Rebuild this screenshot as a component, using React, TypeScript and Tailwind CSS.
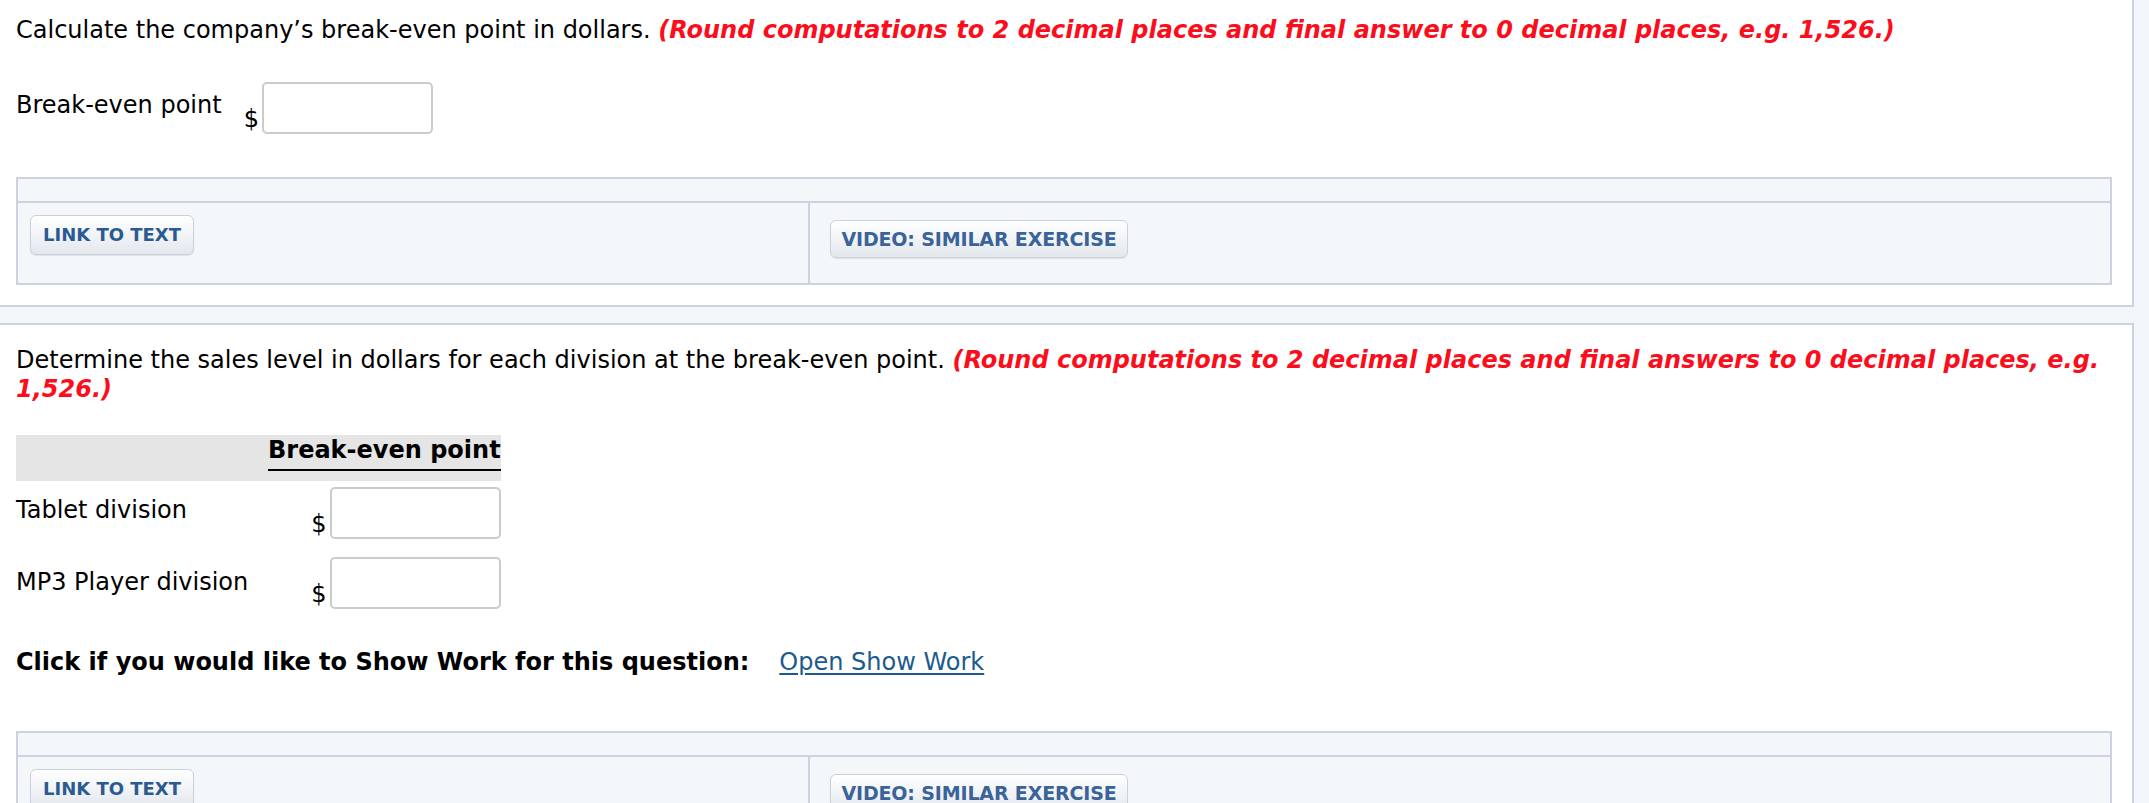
import React from "react";

function LinkButton() {
  return (
    <button className="h-[40px] w-[164px] rounded-[6px] border border-[#c9d1dc] bg-gradient-to-b from-white to-[#e3e8ee] text-[18px] font-bold leading-none text-[#2b5a91] shadow-[0_1px_1px_rgba(0,0,0,0.08)]">
      LINK TO TEXT
    </button>
  );
}

function VideoButton() {
  return (
    <button className="h-[38px] w-[298px] rounded-[6px] border border-[#c9d1dc] bg-gradient-to-b from-white to-[#e3e8ee] text-[19px] font-bold leading-none tracking-[-0.15px] text-[#3a6399] shadow-[0_1px_1px_rgba(0,0,0,0.08)]">
      VIDEO: SIMILAR EXERCISE
    </button>
  );
}

function ResourceBox() {
  return (
    <div className="border-2 border-[#cad3df] bg-[#f4f7fa]">
      <div className="h-[24px] border-b-2 border-[#cad3df]" />
      <div className="grid h-[80px] grid-cols-[790px_1fr]">
        <div className="pl-3 pt-3">
          <LinkButton />
        </div>
        <div className="border-l-2 border-[#cad3df] pl-5 pt-[17px]">
          <VideoButton />
        </div>
      </div>
    </div>
  );
}

function AnswerInput() {
  return (
    <input
      type="text"
      className="h-[52px] w-[171px] rounded-[5px] border-2 border-[#cbcbcb] bg-white outline-none"
    />
  );
}

export default function App() {
  return (
    <div className="min-h-screen bg-[#f4f7fa] font-['DejaVu_Sans',Verdana,sans-serif] text-[24px] leading-[29px] text-black">
      <section className="w-[2134px] border-b-2 border-r-2 border-[#cad3df] bg-white pb-5 pl-4 pr-5 pt-4">
        <p className="whitespace-nowrap">
          Calculate the company’s break-even point in dollars.{" "}
          <span className="font-bold italic text-[#fc0d1b]">
            (Round computations to 2 decimal places and final answer to 0 decimal places, e.g. 1,526.)
          </span>
        </p>
        <div className="mt-[37px] flex">
          <span className="mt-[9px] self-start">Break-even point</span>
          <span className="ml-[22px] mr-[3px] self-end">$</span>
          <AnswerInput />
        </div>
        <div className="mt-[43px]">
          <ResourceBox />
        </div>
      </section>

      <div className="h-4" />

      <section className="w-[2134px] border-r-2 border-t-2 border-[#cad3df] bg-white pb-10 pl-4 pr-5 pt-[21px]">
        <p className="whitespace-nowrap">
          Determine the sales level in dollars for each division at the break-even point.{" "}
          <span className="font-bold italic text-[#fc0d1b]">
            (Round computations to 2 decimal places and final answers to 0 decimal places, e.g.
            <br />
            1,526.)
          </span>
        </p>

        <div className="mt-[31px] inline-grid grid-cols-[252px_auto]">
          <div className="bg-[#e5e5e5]" />
          <div className="bg-[#e5e5e5] pb-[10px] pt-[1px]">
            <div className="border-b-2 border-black pb-[4px] text-right font-bold">Break-even point</div>
          </div>

          <div className="pt-[6px]">
            <div className="mt-[9px]">Tablet division</div>
          </div>
          <div className="flex items-end justify-end pt-[6px]">
            <span className="mr-[3px]">$</span>
            <AnswerInput />
          </div>

          <div className="pt-[18px]">
            <div className="mt-[11px]">MP3 Player division</div>
          </div>
          <div className="flex items-end justify-end pt-[18px]">
            <span className="mr-[3px]">$</span>
            <AnswerInput />
          </div>
        </div>

        <div className="mt-[39px] flex">
          <span className="font-bold">Click if you would like to Show Work for this question:</span>
          <a href="#" className="ml-[30px] text-[#1d5a8e] underline underline-offset-[3px]">
            Open Show Work
          </a>
        </div>

        <div className="mt-[54px]">
          <ResourceBox />
        </div>
      </section>
    </div>
  );
}
